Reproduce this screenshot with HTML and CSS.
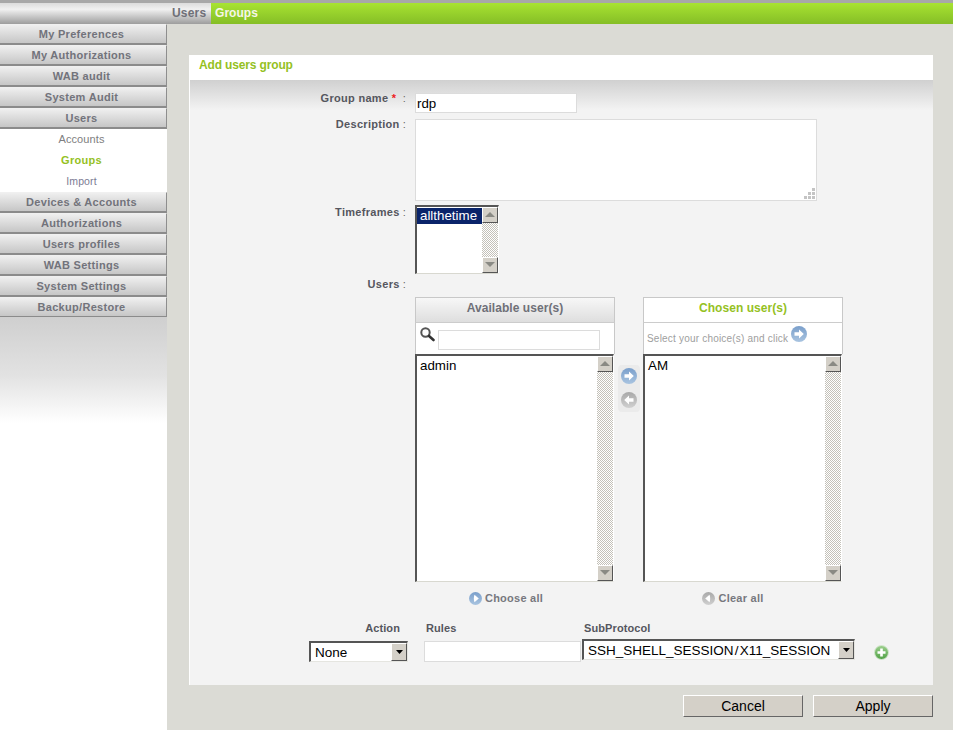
FILE: index.html
```html
<!DOCTYPE html>
<html lang="en">
<head>
<meta charset="utf-8">
<title>Add users group</title>
<link rel="stylesheet" href="styles.css">
</head>
<body>
<svg class="defs" width="0" height="0">
  <defs>
    <linearGradient id="blue" x1="0" y1="0" x2="0" y2="1"><stop offset="0" stop-color="#7a9fcb"/><stop offset="1" stop-color="#a9c4e0"/></linearGradient>
    <linearGradient id="grey" x1="0" y1="0" x2="0" y2="1"><stop offset="0" stop-color="#a8a8a8"/><stop offset="1" stop-color="#d0d0d0"/></linearGradient>
    <linearGradient id="green" x1="0" y1="0" x2="0" y2="1"><stop offset="0" stop-color="#9ed08f"/><stop offset="1" stop-color="#4fa044"/></linearGradient>
  </defs>
</svg>
<header class="topbar">
  <div class="crumb-spacer"></div>
  <div class="crumb-first">Users</div>
  <div class="crumb-current">Groups</div>
</header>
<div class="page">
  <nav class="sidebar">
    <a class="nav-item">My Preferences</a>
    <a class="nav-item">My Authorizations</a>
    <a class="nav-item">WAB audit</a>
    <a class="nav-item">System Audit</a>
    <a class="nav-item">Users</a>
    <a class="sub-item">Accounts</a>
    <a class="sub-item sub-active">Groups</a>
    <a class="sub-item sub-alt">Import</a>
    <a class="nav-item">Devices &amp; Accounts</a>
    <a class="nav-item">Authorizations</a>
    <a class="nav-item">Users profiles</a>
    <a class="nav-item">WAB Settings</a>
    <a class="nav-item">System Settings</a>
    <a class="nav-item">Backup/Restore</a>
    <div class="nav-fade"></div>
  </nav>
  <main class="content">
    <section class="panel">
      <h1 class="panel-title">Add users group</h1>
      <div class="panel-body">
        <div class="row row-name">
          <div class="label label-name">Group name <span class="req">*</span> <span class="colon-wide">:</span></div>
          <div class="text-input name-input">rdp</div>
        </div>
        <div class="row row-desc">
          <div class="label label-desc">Description<span class="colon">:</span></div>
          <div class="text-input desc-input">
            <svg class="grip" width="14" height="12" viewBox="0 0 14 12"><g fill="#c4c4c4"><rect x="10" y="0" width="3" height="3"/><rect x="6" y="4" width="3" height="3"/><rect x="10" y="4" width="3" height="3"/><rect x="2" y="8" width="3" height="3"/><rect x="6" y="8" width="3" height="3"/><rect x="10" y="8" width="3" height="3"/></g></svg>
          </div>
        </div>
        <div class="row row-time">
          <div class="label label-time">Timeframes<span class="colon">:</span></div>
          <div class="listbox time-list">
            <div class="list-items"><div class="opt-selected">allthetime</div></div>
            <div class="scroll">
              <div class="scroll-btn"><svg width="10" height="6" viewBox="0 0 10 6"><path d="M5 0 10 5H0Z" fill="#8a8a84"/></svg></div>
              <div class="scroll-track"></div>
              <div class="scroll-btn"><svg width="10" height="6" viewBox="0 0 10 6"><path d="M0 0H10L5 5Z" fill="#8a8a84"/></svg></div>
            </div>
          </div>
        </div>
        <div class="row row-users">
          <div class="label label-users">Users<span class="colon">:</span></div>
        </div>
        <div class="picker">
          <div class="pick-col">
            <div class="pick-box">
              <div class="pick-head head-grey">Available user(s)</div>
              <div class="pick-sub search-sub">
                <svg class="lens" width="15" height="15" viewBox="0 0 15 15"><circle cx="5.5" cy="5.5" r="4.2" fill="#fff" stroke="#555" stroke-width="2"/><path d="M9 9 13.5 13" stroke="#333" stroke-width="2.6" stroke-linecap="round"/></svg>
                <div class="search-input"></div>
              </div>
              <div class="listbox big-list">
                <div class="list-items"><div class="opt">admin</div></div>
                <div class="scroll">
                  <div class="scroll-btn"><svg width="10" height="6" viewBox="0 0 10 6"><path d="M5 0 10 5H0Z" fill="#8a8a84"/></svg></div>
                  <div class="scroll-track"></div>
                  <div class="scroll-btn"><svg width="10" height="6" viewBox="0 0 10 6"><path d="M0 0H10L5 5Z" fill="#8a8a84"/></svg></div>
                </div>
              </div>
            </div>
            <div class="pick-foot foot-left">
              <svg class="icon-small" width="13" height="13" viewBox="0 0 13 13"><circle cx="6.5" cy="6.5" r="6.5" fill="url(#blue)"/><path d="M5.5 2.8 9.8 6.5 5.5 10.2C4.6 8 4.6 5 5.5 2.8Z" fill="#fff"/></svg>
              <span>Choose all</span>
            </div>
          </div>
          <div class="move-col">
            <svg width="16" height="16" viewBox="0 0 16 16"><circle cx="8" cy="8" r="8" fill="url(#blue)"/><path d="M3.5 6.3H8V3.5L12.8 8 8 12.5V9.7H3.5Z" fill="#fff"/></svg>
            <svg width="16" height="16" viewBox="0 0 16 16"><circle cx="8" cy="8" r="8" fill="url(#grey)"/><path d="M12.5 6.3H8V3.5L3.2 8 8 12.5V9.7H12.5Z" fill="#fff"/></svg>
          </div>
          <div class="pick-col">
            <div class="pick-box">
              <div class="pick-head head-green">Chosen user(s)</div>
              <div class="pick-sub hint-sub">
                <span class="hint">Select your choice(s) and click</span>
                <svg class="hint-icon" width="16" height="16" viewBox="0 0 16 16"><circle cx="8" cy="8" r="8" fill="url(#blue)"/><path d="M3.5 6.3H8V3.5L12.8 8 8 12.5V9.7H3.5Z" fill="#fff"/></svg>
              </div>
              <div class="listbox big-list">
                <div class="list-items"><div class="opt">AM</div></div>
                <div class="scroll">
                  <div class="scroll-btn"><svg width="10" height="6" viewBox="0 0 10 6"><path d="M5 0 10 5H0Z" fill="#8a8a84"/></svg></div>
                  <div class="scroll-track"></div>
                  <div class="scroll-btn"><svg width="10" height="6" viewBox="0 0 10 6"><path d="M0 0H10L5 5Z" fill="#8a8a84"/></svg></div>
                </div>
              </div>
            </div>
            <div class="pick-foot foot-right">
              <svg class="icon-small" width="13" height="13" viewBox="0 0 13 13"><circle cx="6.5" cy="6.5" r="6.5" fill="url(#grey)"/><path d="M7.5 2.8 3.2 6.5 7.5 10.2C8.4 8 8.4 5 7.5 2.8Z" fill="#fff"/></svg>
              <span>Clear all</span>
            </div>
          </div>
        </div>
        <div class="rule-row">
          <div class="rule-col action-col">
            <div class="rule-label label-action">Action</div>
            <div class="combo action-combo"><span>None</span><div class="combo-btn"><svg width="7" height="4" viewBox="0 0 7 4"><path d="M0 0H7L3.5 4Z" fill="#000"/></svg></div></div>
          </div>
          <div class="rule-col rules-col">
            <div class="rule-label rule-pad">Rules</div>
            <div class="text-input rules-input"></div>
          </div>
          <div class="rule-col sub-col">
            <div class="rule-label rule-pad">SubProtocol</div>
            <div class="combo sub-combo"><span class="sub-value">SSH_SHELL_SESSION / X11_SESSION</span><div class="combo-btn"><svg width="7" height="4" viewBox="0 0 7 4"><path d="M0 0H7L3.5 4Z" fill="#000"/></svg></div></div>
          </div>
          <svg class="add-icon" width="15" height="15" viewBox="0 0 15 15"><circle cx="7.5" cy="7.5" r="7" fill="url(#green)" stroke="#d5e8d0" stroke-width="1"/><path d="M6.2 3.5H8.8V6.2H11.5V8.8H8.8V11.5H6.2V8.8H3.5V6.2H6.2Z" fill="#fff"/></svg>
        </div>
      </div>
    </section>
    <div class="actions">
      <button class="btn" type="button">Cancel</button>
      <button class="btn" type="button">Apply</button>
    </div>
  </main>
</div>
</body>
</html>
```
FILE: styles.css
```css
* { box-sizing: border-box; }
html, body { margin: 0; padding: 0; height: 730px; overflow: hidden; }
body { font-family: "Liberation Sans", Arial, sans-serif; background: #dbdbd5; }
.defs { display: block; height: 0; }

.topbar {
  display: flex;
  height: 24px;
  border-top: 3px solid #a8a8a8;
  background: linear-gradient(#dcdcdc, #f1f1f1 30%, #9d9d9d);
  font-size: 12px;
  font-weight: bold;
  line-height: 20px;
  letter-spacing: 0.2px;
}
.crumb-spacer { width: 172px; }
.crumb-first { width: 39px; color: #6f7078; }
.crumb-current {
  flex: 1;
  padding-left: 4px;
  color: #f6f6e8;
  letter-spacing: 0.05px;
  background: linear-gradient(#a8e332, #85be26);
}

.page { display: flex; height: 706px; }

.sidebar {
  width: 167px;
  background: #fff;
  display: flex;
  flex-direction: column;
  flex: none;
}
.nav-item {
  height: 21px;
  border-right: 1px solid #8e8e8e;
  border-bottom: 2px solid #8b8b8b;
  border-top: 1px solid #f0f0f0;
  background: linear-gradient(#efefef, #c6c6c6);
  color: #72737b;
  font-size: 11px;
  font-weight: bold;
  letter-spacing: 0.3px;
  line-height: 18px;
  text-align: center;
  padding-right: 3px;
}
.sub-item {
  height: 21px;
  font-size: 11px;
  line-height: 21px;
  text-align: center;
  color: #7e7e80;
  padding-right: 4px;
  letter-spacing: 0.1px;
}
.sub-active { color: #95c11f; font-weight: bold; letter-spacing: 0.3px; }
.sub-alt { color: #7c7c94; font-size: 10.5px; }
.nav-fade { height: 106px; margin-top: -1px; background: linear-gradient(#cfcfcf, #e2e2e2 55%, #fff); }

.content { flex: 1; padding: 31px 20px 0 22px; }
.panel { background: #fff; height: 630px; display: flex; flex-direction: column; }
.panel-title {
  margin: 0;
  height: 25px;
  padding-left: 10px;
  font-size: 12px;
  line-height: 21px;
  font-weight: bold;
  color: #95c11f;
  letter-spacing: -0.15px;
}
.panel-body {
  flex: 1;
  margin-left: 1px;
  background: linear-gradient(#d0d0d0, #f3f3f3 30px);
  padding-top: 13px;
}

.row { display: flex; }
.label {
  width: 225px;
  flex: none;
  text-align: right;
  padding-right: 9px;
  font-size: 11px;
  font-weight: bold;
  color: #55565e;
  letter-spacing: 0.3px;
}
.colon { font-weight: normal; margin-left: 3px; color: #666; }
.colon-wide { font-weight: normal; margin-left: 3px; color: #666; }
.req { color: #e22; }
.text-input { border: 1px solid #dcdcdc; background: #fff; font-size: 13.33px; color: #000; }

.row-name { height: 20px; }
.label-name { line-height: 11px; }
.name-input { width: 162px; height: 20px; line-height: 20px; padding-left: 1px; }
.row-desc { margin-top: 6px; height: 82px; }
.label-desc { line-height: 11px; }
.desc-input { width: 402px; height: 82px; position: relative; }
.grip { position: absolute; right: 0; bottom: 0; }
.row-time { margin-top: 4px; height: 69px; }
.label-time { line-height: 15px; }

.listbox {
  display: flex;
  background: #fff;
  border-top: 2px solid #555;
  border-left: 2px solid #555;
  border-right: 1px solid #fff;
  border-bottom: 1px solid #d8d8d0;
}
.time-list { width: 84px; height: 69px; }
.list-items { flex: 1; font-size: 13.33px; color: #000; }
.opt-selected { background: #0a246a; color: #fff; padding-left: 3px; height: 16px; line-height: 16px; margin-top: 1px; }
.opt { padding-left: 3px; line-height: 16px; padding-top: 1px; }
.scroll { width: 16px; display: flex; flex-direction: column; }
.scroll-track {
  flex: 1;
  background: repeating-conic-gradient(#c4c1b9 0 25%, #fff 0 50%) 0 0 / 2px 2px;
}
.scroll-btn {
  height: 16px;
  display: flex;
  align-items: center;
  justify-content: center;
  background: #d4d0c8;
  border-top: 1px solid #fff;
  border-left: 1px solid #fff;
  border-right: 1px solid #555;
  border-bottom: 1px solid #555;
}

.row-users { margin-top: 4px; height: 19px; }
.label-users { line-height: 12px; }

.picker { display: flex; margin-left: 225px; }
.pick-col { width: 200px; display: flex; flex-direction: column; }
.pick-box { display: flex; flex-direction: column; }
.pick-head {
  height: 26px;
  border: 1px solid #c8c8c8;
  border-bottom-color: #cccccc;
  font-size: 12px;
  font-weight: bold;
  text-align: center;
  line-height: 21px;
  letter-spacing: 0.05px;
}
.head-grey { background: linear-gradient(#f7f7f7, #dedede); color: #6f7078; }
.head-green { background: #fff; color: #95c11f; }
.pick-sub {
  height: 31px;
  border-left: 1px solid #c8c8c8;
  border-right: 1px solid #c8c8c8;
  background: #fff;
  display: flex;
}
.search-sub { padding: 4px 0 0 4px; }
.lens { flex: none; }
.search-input { width: 162px; height: 20px; margin: 3px 0 0 3px; border: 1px solid #dcdcdc; background: #fff; }
.hint-sub { padding-left: 3px; }
.hint { font-size: 10px; color: #9e9e9e; line-height: 32px; letter-spacing: 0.2px; white-space: nowrap; }
.hint-icon { margin: 3px 0 0 3px; flex: none; }
.big-list { height: 228px; width: 199px; }
.big-list .list-items { padding: 1px 0 0 0; }
.pick-foot {
  display: flex;
  justify-content: center;
  align-items: center;
  gap: 3px;
  margin-top: 9px;
  height: 14px;
  font-size: 11px;
  font-weight: bold;
  color: #77787e;
  letter-spacing: 0.25px;
}
.foot-left { padding-right: 18px; }
.foot-right { padding-right: 20px; }
.move-col {
  width: 22px;
  height: 47px;
  margin: 68px 3px 0 3px;
  background: #ebebeb;
  border-radius: 4px;
  display: flex;
  flex-direction: column;
  align-items: center;
  gap: 8px;
  padding-top: 3px;
}

.rule-row { display: flex; margin-top: 16px; padding-left: 119px; }
.rule-col { display: flex; flex-direction: column; }
.rule-label { font-size: 11px; font-weight: bold; color: #55565e; height: 20px; line-height: 15px; letter-spacing: 0.1px; }
.rule-pad { padding-left: 2px; }
.action-col { width: 115px; }
.label-action { text-align: right; padding-right: 24px; }
.rules-col { width: 158px; }
.rules-input { width: 157px; height: 21px; }
.combo {
  display: flex;
  justify-content: space-between;
  background: #fff;
  border-top: 2px solid #555;
  border-left: 2px solid #555;
  border-bottom: 1px solid #e5e5e0;
  border-right: 1px solid #e5e5e0;
  color: #000;
}
.action-combo { width: 99px; height: 21px; line-height: 19px; padding-left: 4px; font-size: 13.5px; }
.sub-combo { width: 273px; height: 21px; margin-top: -2px; line-height: 19px; padding-left: 4px; font-size: 13.5px; }
.sub-value { white-space: nowrap; word-spacing: -2.5px; }
.combo-btn {
  width: 16px;
  height: 18px;
  flex: none;
  display: flex;
  align-items: center;
  justify-content: center;
  background: #d4d0c8;
  border-top: 1px solid #fff;
  border-left: 1px solid #fff;
  border-right: 1px solid #555;
  border-bottom: 1px solid #555;
}
.add-icon { margin: 24px 0 0 19px; }

.actions { display: flex; justify-content: flex-end; gap: 10px; margin-top: 10px; }
.btn {
  width: 120px;
  height: 22px;
  padding: 0;
  background: #d4d0c8;
  border-top: 1px solid #fff;
  border-left: 1px solid #fff;
  border-right: 1px solid #666;
  border-bottom: 1px solid #666;
  font-family: "Liberation Sans", Arial, sans-serif;
  font-size: 14px;
  color: #000;
}
```
